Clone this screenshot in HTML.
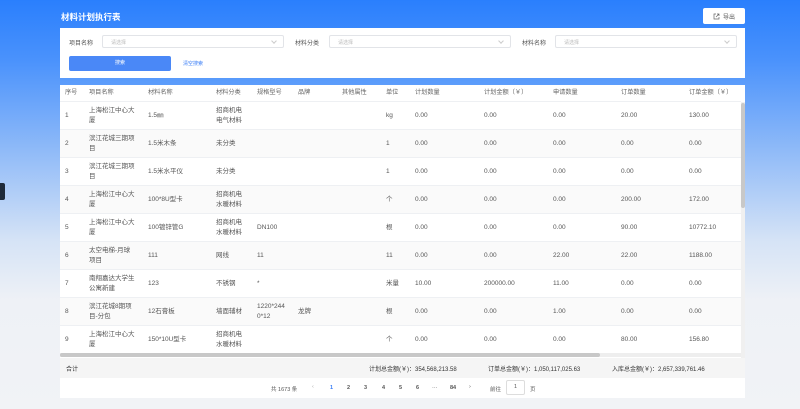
<!DOCTYPE html>
<html><head><meta charset="utf-8"><style>
*{margin:0;padding:0;box-sizing:border-box}
body{width:800px;height:409px;overflow:hidden;font-family:"Liberation Sans","Noto Sans CJK SC",sans-serif;background:linear-gradient(180deg,#2a7ffd 0px,#4a92fc 60px,#8fbaf8 150px,#d5e3f6 240px,#eef1f6 300px,#f1f3f6 409px);position:relative;color:#555}
.a{position:absolute}
.title{left:61px;top:11px;color:#fff;font-size:8.5px;font-weight:bold}
.exp{left:703px;top:8px;width:42px;height:16px;background:#fff;border-radius:2px;font-size:6px;color:#555;display:flex;align-items:center;justify-content:center;gap:3px}
.panel{left:60px;top:28px;width:685px;height:50px;background:#fff}
.lbl{font-size:6px;color:#555}
.sel{height:13px;border:1px solid #e2e4e8;border-radius:2px;font-size:5px;color:#bbb;padding:3px 8px;background:#fff}
.sel:after{content:"";position:absolute;right:7px;top:3px;width:3px;height:3px;border-right:1px solid #ccc;border-bottom:1px solid #ccc;transform:rotate(45deg)}
.btn{left:69px;top:56px;width:102px;height:15px;background:#4a88f7;border-radius:2px;color:#fff;font-size:5px;text-align:center;line-height:15px}
.tbl{left:60px;top:85px;width:685px;height:273px;background:#fff;overflow:hidden}
.row{position:absolute;left:0;width:681px;height:28px;border-bottom:1px solid #eef0f3;font-size:6.5px;color:#555}
.row span{position:absolute;top:50%;transform:translateY(-50%);line-height:10px;word-break:break-all}
.hd{height:17px;font-size:6.2px;color:#666}
.p{width:46px}.c{width:28px}
.sum{left:60px;top:358px;width:685px;height:20px;background:#f5f5f5;font-size:6px;color:#333}
.pg{left:60px;top:378px;width:685px;height:20px;background:#fff;font-size:5.5px;color:#555}
</style></head><body>
<div class="a title">材料计划执行表</div>
<div class="a exp"><svg width="7" height="7" viewBox="0 0 7 7"><path d="M3 1H1v5h5V4M4 1h2v2M6 1L3 4" stroke="#666" stroke-width=".7" fill="none"/></svg>导出</div>
<div class="a panel"></div>
<div class="a lbl" style="left:69px;top:38px">项目名称</div>
<div class="a sel" style="left:102px;top:35px;width:182px">请选择</div>
<div class="a lbl" style="left:295px;top:38px">材料分类</div>
<div class="a sel" style="left:329px;top:35px;width:182px">请选择</div>
<div class="a lbl" style="left:522px;top:38px">材料名称</div>
<div class="a sel" style="left:555px;top:35px;width:182px">请选择</div>
<div class="a btn">搜索</div>
<div class="a" style="left:183px;top:60px;font-size:5px;color:#3a7ef6">清空搜索</div>
<div class="a tbl">
<div class="row hd" style="top:0"><span style="left:5px">序号</span><span style="left:29px">项目名称</span><span style="left:88px">材料名称</span><span style="left:156px">材料分类</span><span style="left:197px">规格型号</span><span style="left:238px">品牌</span><span style="left:282px">其他属性</span><span style="left:326px">单位</span><span style="left:355px">计划数量</span><span style="left:424px">计划金额（￥）</span><span style="left:493px">申请数量</span><span style="left:561px">订单数量</span><span style="left:629px">订单金额（￥）</span></div>
<div class="row" style="top:17px"><span style="left:5px">1</span><span class="p" style="left:29px">上海松江中心大厦</span><span style="left:88px">1.5㎜</span><span class="c" style="left:156px">招商机电电气材料</span><span style="left:326px">kg</span><span style="left:355px">0.00</span><span style="left:424px">0.00</span><span style="left:493px">0.00</span><span style="left:561px">20.00</span><span style="left:629px">130.00</span></div>
<div class="row" style="top:45px;background:#fafafa"><span style="left:5px">2</span><span class="p" style="left:29px">滨江花城三期项目</span><span style="left:88px">1.5米木条</span><span style="left:156px">未分类</span><span style="left:326px">1</span><span style="left:355px">0.00</span><span style="left:424px">0.00</span><span style="left:493px">0.00</span><span style="left:561px">0.00</span><span style="left:629px">0.00</span></div>
<div class="row" style="top:73px"><span style="left:5px">3</span><span class="p" style="left:29px">滨江花城三期项目</span><span style="left:88px">1.5米水平仪</span><span style="left:156px">未分类</span><span style="left:326px">1</span><span style="left:355px">0.00</span><span style="left:424px">0.00</span><span style="left:493px">0.00</span><span style="left:561px">0.00</span><span style="left:629px">0.00</span></div>
<div class="row" style="top:101px;background:#fafafa"><span style="left:5px">4</span><span class="p" style="left:29px">上海松江中心大厦</span><span style="left:88px">100*8U型卡</span><span class="c" style="left:156px">招商机电水暖材料</span><span style="left:326px">个</span><span style="left:355px">0.00</span><span style="left:424px">0.00</span><span style="left:493px">0.00</span><span style="left:561px">200.00</span><span style="left:629px">172.00</span></div>
<div class="row" style="top:129px"><span style="left:5px">5</span><span class="p" style="left:29px">上海松江中心大厦</span><span style="left:88px">100镀锌管G</span><span class="c" style="left:156px">招商机电水暖材料</span><span style="left:197px">DN100</span><span style="left:326px">根</span><span style="left:355px">0.00</span><span style="left:424px">0.00</span><span style="left:493px">0.00</span><span style="left:561px">90.00</span><span style="left:629px">10772.10</span></div>
<div class="row" style="top:157px;background:#fafafa"><span style="left:5px">6</span><span class="p" style="left:29px">太空电梯-月球项目</span><span style="left:88px">111</span><span style="left:156px">网线</span><span style="left:197px">11</span><span style="left:326px">11</span><span style="left:355px">0.00</span><span style="left:424px">0.00</span><span style="left:493px">22.00</span><span style="left:561px">22.00</span><span style="left:629px">1188.00</span></div>
<div class="row" style="top:185px"><span style="left:5px">7</span><span class="p" style="left:29px">南翔嘉达大学生公寓新建</span><span style="left:88px">123</span><span style="left:156px">不锈钢</span><span style="left:197px">*</span><span style="left:326px">米量</span><span style="left:355px">10.00</span><span style="left:424px">200000.00</span><span style="left:493px">11.00</span><span style="left:561px">0.00</span><span style="left:629px">0.00</span></div>
<div class="row" style="top:213px;background:#fafafa"><span style="left:5px">8</span><span class="p" style="left:29px">滨江花城8期项目-分包</span><span style="left:88px">12石膏板</span><span style="left:156px">墙面辅材</span><span style="left:197px;width:29px">1220*2440*12</span><span style="left:238px">龙牌</span><span style="left:326px">根</span><span style="left:355px">0.00</span><span style="left:424px">0.00</span><span style="left:493px">1.00</span><span style="left:561px">0.00</span><span style="left:629px">0.00</span></div>
<div class="row" style="top:241px"><span style="left:5px">9</span><span class="p" style="left:29px">上海松江中心大厦</span><span style="left:88px">150*10U型卡</span><span class="c" style="left:156px">招商机电水暖材料</span><span style="left:326px">个</span><span style="left:355px">0.00</span><span style="left:424px">0.00</span><span style="left:493px">0.00</span><span style="left:561px">80.00</span><span style="left:629px">156.80</span></div>
<div class="a" style="left:0;top:268px;width:681px;height:4px;background:#eee"></div>
<div class="a" style="left:0;top:268px;width:540px;height:4px;background:#c8c8c8;border-radius:2px"></div>
<div class="a" style="left:681px;top:17px;width:4px;height:256px;background:#f0f0f0"></div>
<div class="a" style="left:681px;top:18px;width:4px;height:105px;background:#c8c8c8;border-radius:2px"></div>
</div>
<div class="a sum"><span class="a" style="left:6px;top:6px">合计</span><span class="a" style="left:309px;top:6px">计划总金额(￥)：354,568,213.58</span><span class="a" style="left:428px;top:6px">订单总金额(￥)：1,050,117,025.63</span><span class="a" style="left:552px;top:6px">入库总金额(￥)：2,657,339,761.46</span></div>
<div class="a pg"><span class="a" style="left:211px;top:7px">共 1673 条</span><span class="a" style="left:252px;top:6px;color:#aaa">‹</span><span class="a" style="left:270px;top:7px;color:#3a7ef6;font-weight:bold">1</span><span class="a" style="left:287px;top:7px;font-weight:bold">2</span><span class="a" style="left:304px;top:7px;font-weight:bold">3</span><span class="a" style="left:322px;top:7px;font-weight:bold">4</span><span class="a" style="left:339px;top:7px;font-weight:bold">5</span><span class="a" style="left:356px;top:7px;font-weight:bold">6</span><span class="a" style="left:372px;top:7px">···</span><span class="a" style="left:390px;top:7px;font-weight:bold">84</span><span class="a" style="left:409px;top:6px">›</span><span class="a" style="left:430px;top:7px">前往</span><span class="a" style="left:446px;top:2px;width:19px;height:15px;border:1px solid #ddd;border-radius:2px;text-align:center;line-height:13px">1</span><span class="a" style="left:470px;top:7px">页</span></div>
<div class="a" style="left:0;top:183px;width:5px;height:17px;background:#1e2a3a;border-radius:0 2px 2px 0"></div>
</body></html>
